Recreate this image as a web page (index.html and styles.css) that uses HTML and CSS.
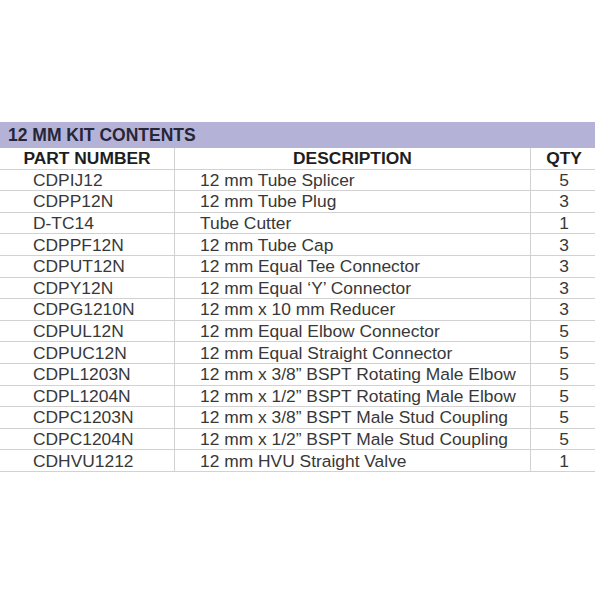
FILE: index.html
```html
<!DOCTYPE html>
<html>
<head>
<meta charset="utf-8">
<link rel="stylesheet" href="styles.css">
</head>
<body>
<div class="page">
  <div class="title">12 MM KIT CONTENTS</div>
  <table class="kit">
    <thead>
      <tr><th class="c-part">PART NUMBER</th><th class="c-desc">DESCRIPTION</th><th class="c-qty">QTY</th></tr>
    </thead>
    <tbody>
      <tr><td class="c-part">CDPIJ12</td><td class="c-desc">12 mm Tube Splicer</td><td class="c-qty">5</td></tr>
      <tr><td class="c-part">CDPP12N</td><td class="c-desc">12 mm Tube Plug</td><td class="c-qty">3</td></tr>
      <tr><td class="c-part">D-TC14</td><td class="c-desc">Tube Cutter</td><td class="c-qty">1</td></tr>
      <tr><td class="c-part">CDPPF12N</td><td class="c-desc">12 mm Tube Cap</td><td class="c-qty">3</td></tr>
      <tr><td class="c-part">CDPUT12N</td><td class="c-desc">12 mm Equal Tee Connector</td><td class="c-qty">3</td></tr>
      <tr><td class="c-part">CDPY12N</td><td class="c-desc">12 mm Equal ‘Y’ Connector</td><td class="c-qty">3</td></tr>
      <tr><td class="c-part">CDPG1210N</td><td class="c-desc">12 mm x 10 mm Reducer</td><td class="c-qty">3</td></tr>
      <tr><td class="c-part">CDPUL12N</td><td class="c-desc">12 mm Equal Elbow Connector</td><td class="c-qty">5</td></tr>
      <tr><td class="c-part">CDPUC12N</td><td class="c-desc">12 mm Equal Straight Connector</td><td class="c-qty">5</td></tr>
      <tr><td class="c-part">CDPL1203N</td><td class="c-desc">12 mm x 3/8” BSPT Rotating Male Elbow</td><td class="c-qty">5</td></tr>
      <tr><td class="c-part">CDPL1204N</td><td class="c-desc">12 mm x 1/2” BSPT Rotating Male Elbow</td><td class="c-qty">5</td></tr>
      <tr><td class="c-part">CDPC1203N</td><td class="c-desc">12 mm x 3/8” BSPT Male Stud Coupling</td><td class="c-qty">5</td></tr>
      <tr><td class="c-part">CDPC1204N</td><td class="c-desc">12 mm x 1/2” BSPT Male Stud Coupling</td><td class="c-qty">5</td></tr>
      <tr><td class="c-part">CDHVU1212</td><td class="c-desc">12 mm HVU Straight Valve</td><td class="c-qty">1</td></tr>
    </tbody>
  </table>
</div>
</body>
</html>
```
FILE: styles.css
```css
html, body {
  margin: 0;
  padding: 0;
  background: #ffffff;
}
.page {
  width: 595px;
  height: 595px;
  padding-top: 122px;
  box-sizing: border-box;
  font-family: "Liberation Sans", Arial, sans-serif;
}
.title {
  height: 26px;
  line-height: 27px;
  background: #b4b2d6;
  color: #262636;
  font-weight: bold;
  font-size: 17.5px;
  padding-left: 8px;
}
.kit {
  width: 595px;
  border-collapse: collapse;
  table-layout: fixed;
}
.kit th, .kit td {
  height: 20.6px;
  padding: 0;
  line-height: 18px;
  font-size: 17.4px;
  border-bottom: 1px solid #d2d2d2;
  border-left: 1px solid #d2d2d2;
  white-space: nowrap;
}
.kit th:first-child, .kit td:first-child {
  border-left: none;
}
.kit th {
  font-weight: bold;
  color: #1e1e1e;
  text-align: center;
}
.kit td {
  color: #383838;
}
.kit .c-part { width: 174px; }
.kit .c-desc { width: 355px; }
.kit .c-qty { width: 66px; }
.kit td.c-part { padding-left: 33px; }
.kit td.c-desc { padding-left: 25px; }
.kit td.c-qty { text-align: center; }
```
